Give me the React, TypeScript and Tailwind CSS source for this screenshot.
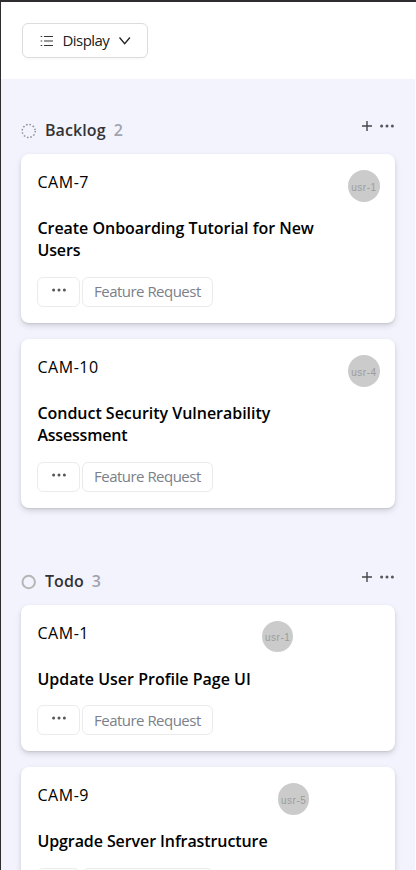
import React from "react";

type Issue = {
  id: string;
  lines: { text: string; tracking: string }[];
  user: string;
  headWidth: string;
  avatar: string;
};

const backlog: Issue[] = [
  {
    id: "CAM-7",
    lines: [
      { text: "Create Onboarding Tutorial for New", tracking: "tracking-[-0.03px]" },
      { text: "Users", tracking: "tracking-[-0.1px]" },
    ],
    user: "usr-1",
    headWidth: "w-[342.5px]",
    avatar: "size-8",
  },
  {
    id: "CAM-10",
    lines: [
      { text: "Conduct Security Vulnerability", tracking: "tracking-[-0.02px]" },
      { text: "Assessment", tracking: "tracking-[-0.2px]" },
    ],
    user: "usr-4",
    headWidth: "w-[342.5px]",
    avatar: "size-8",
  },
];

const todo: Issue[] = [
  {
    id: "CAM-1",
    lines: [{ text: "Update User Profile Page UI", tracking: "tracking-[0px]" }],
    user: "usr-1",
    headWidth: "w-[256px]",
    avatar: "size-[31.5px]",
  },
  {
    id: "CAM-9",
    lines: [{ text: "Upgrade Server Infrastructure", tracking: "tracking-[-0.09px]" }],
    user: "usr-5",
    headWidth: "w-[272px]",
    avatar: "size-[31.5px]",
  },
];

function Dots({ className = "" }: { className?: string }) {
  return (
    <svg width="16" height="6" viewBox="0 0 16 6" className={className} fill="#55555a">
      <circle cx="2.6" cy="3" r="1.5" />
      <circle cx="8" cy="3" r="1.5" />
      <circle cx="13.4" cy="3" r="1.5" />
    </svg>
  );
}

function IssueCard({ issue }: { issue: Issue }) {
  return (
    <article className="rounded-lg bg-white p-4 shadow-[0_3px_6px_rgba(0,0,0,0.13),0_1px_2px_rgba(0,0,0,0.1)]">
      <div className={`flex h-8 justify-between ${issue.headWidth}`}>
        <span className="text-[16px] leading-[25.5px] font-normal tracking-[0.55px] text-black">{issue.id}</span>
        <span
          className={`flex items-center justify-center rounded-full bg-[#cbcbcb] pt-1 font-['Liberation_Sans',sans-serif] text-[10px] leading-none tracking-[0.5px] text-[#9c9c9c] ${issue.avatar}`}
        >
          {issue.user}
        </span>
      </div>
      <h3 className="mt-[15px] mb-[15px] text-[16px] leading-[22.5px] font-semibold text-black">
        {issue.lines.map((l) => (
          <span key={l.text} className={`block whitespace-nowrap ${l.tracking}`}>
            {l.text}
          </span>
        ))}
      </h3>
      <div className="flex gap-[2px]">
        <span className="flex h-[30px] w-[42.5px] justify-center rounded-md border border-[#ebebeb] pt-[9px]">
          <Dots />
        </span>
        <span className="flex h-[30px] w-[131px] items-center justify-center rounded-md border border-[#ebebeb] text-[15px] font-normal tracking-[-0.52px] whitespace-nowrap text-[#7b808a]">
          Feature Request
        </span>
      </div>
    </article>
  );
}

function Column({
  title,
  count,
  dashed,
  issues,
}: {
  title: string;
  count: number;
  dashed?: boolean;
  issues: Issue[];
}) {
  return (
    <section>
      <header className="flex h-6 items-center">
        <svg width="16" height="16" viewBox="0 0 16 16" fill="none" className="mt-0.5">
          {dashed ? (
            <circle cx="7.7" cy="8" r="6.5" stroke="#8d8d95" strokeWidth="1.5" strokeDasharray="1.5 1.904" />
          ) : (
            <circle cx="7.7" cy="8" r="6.2" stroke="#b5b5b5" strokeWidth="2" />
          )}
        </svg>
        <h2 className="ml-[7.5px] text-[16px] leading-6 font-semibold tracking-[0.1px] text-[#333336]">{title}</h2>
        <span className="ml-2 text-[16px] leading-6 font-semibold text-[#9ea3ae]">{count}</span>
        <span className="mb-[9px] ml-auto flex items-center gap-[6px]">
          <svg width="12" height="12" viewBox="0 0 12 12" stroke="#454549" strokeWidth="1.4">
            <path d="M6 1v10M1 6h10" />
          </svg>
          <Dots />
        </span>
      </header>
      <div className="mt-[11.5px] flex flex-col gap-4">
        {issues.map((i) => (
          <IssueCard key={i.id} issue={i} />
        ))}
      </div>
    </section>
  );
}

export default function App() {
  return (
    <div className="flex h-[870px] w-[416px] flex-col overflow-hidden border-t-2 border-l border-[#2f2d30] bg-white font-['Open_Sans','Noto_Sans',sans-serif]">
      <div className="h-[77px] shrink-0 pt-[21px] pl-[21px]">
        <button className="flex h-[35px] w-[126px] items-center rounded-md border border-[#dcdcdc] pl-[17px] shadow-[0_2px_1px_rgba(0,0,0,0.02)]">
          <svg width="14" height="14" viewBox="0 0 14 14" fill="none" stroke="#343438" strokeWidth="1.1">
            <path d="M4 2.5h9M4 7h9M4 11.5h9M.7 2.5h1.5M.7 7h1.5M.7 11.5h1.5" />
          </svg>
          <span className="mb-0.5 ml-[8.5px] w-[49px] text-left text-[15px] leading-5 font-normal tracking-[-0.55px] text-[#202020]">
            Display
          </span>
          <svg width="14" height="12" viewBox="0 0 14 12" fill="none" stroke="#202020" strokeWidth="1.3" className="ml-[6px]">
            <path d="M1.5 2.5 6.7 8.7l5.2-6.2" />
          </svg>
        </button>
      </div>
      <main className="mr-px flex min-h-0 flex-1 flex-col gap-[61.5px] bg-[#f3f3fd] pt-[39px] pr-[19.7px] pl-[20.4px]">
        <Column title="Backlog" count={2} dashed issues={backlog} />
        <Column title="Todo" count={3} issues={todo} />
      </main>
    </div>
  );
}
